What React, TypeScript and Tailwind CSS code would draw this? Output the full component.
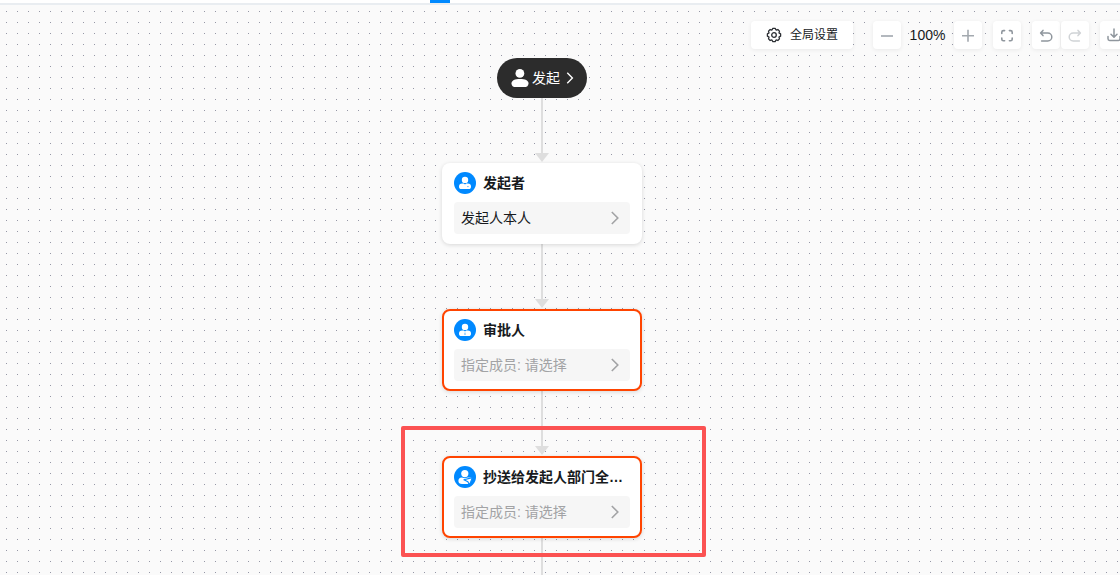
import React from 'react';
import clsx from 'clsx';

type NodeKind = 'initiator' | 'approver' | 'cc';

interface FlowNode {
	kind: NodeKind;
	title: string;
	content: string;
	invalid?: boolean;
	marked?: boolean;
}

const nodes: FlowNode[] = [
	{ kind: 'initiator', title: '发起者', content: '发起人本人' },
	{ kind: 'approver', title: '审批人', content: '指定成员: 请选择', invalid: true },
	{ kind: 'cc', title: '抄送给发起人部门全…', content: '指定成员: 请选择', invalid: true, marked: true },
];

const GearIcon = () => (
	<svg className="size-4" viewBox="0 0 16 16" fill="none" stroke="#2b2e33" strokeWidth="1.3" strokeLinejoin="round">
		<path d="M6.84 1.4h2.32l.91 1.61 1.77-.5 1.65 1.65-.5 1.77 1.61.91v2.32l-1.61.91.5 1.77-1.65 1.65-1.77-.5-.91 1.61H6.84l-.91-1.61-1.77.5-1.65-1.65.5-1.77-1.61-.91V6.84l1.61-.91-.5-1.77 1.65-1.65 1.77.5z" />
		<circle cx="8" cy="8" r="2.3" />
	</svg>
);

const MinusIcon = () => (
	<svg className="size-3.5" viewBox="0 0 14 14" stroke="#b3b8be" strokeWidth="2">
		<path d="M1 8h12" />
	</svg>
);

const PlusIcon = () => (
	<svg className="size-3.5" viewBox="0 0 14 14" stroke="#a3a9af" strokeWidth="1.6">
		<path d="M1 7.8h12M7 1.8v12" />
	</svg>
);

const ExpandIcon = () => (
	<svg className="size-3.5" viewBox="0 0 14 14" fill="none" stroke="#8f969d" strokeWidth="1.6" strokeLinecap="round">
		<path d="M1.8 5.4V4.2q0-1.6 1.6-1.6h1.2M9.4 2.6h1.2q1.6 0 1.6 1.6v1.2M12.2 10v1.2q0 1.6-1.6 1.6H9.4M4.6 12.8H3.4q-1.6 0-1.6-1.6V10" />
	</svg>
);

const UndoIcon = () => (
	<svg className="size-3.5" viewBox="0 0 14 14" fill="none" stroke="currentColor" strokeWidth="1.5" strokeLinecap="round" strokeLinejoin="round">
		<path d="M4 2.4 1.6 5 4 7.6M1.8 5h7a4 4 0 0 1 0 8H2.6" />
	</svg>
);

const RedoIcon = () => (
	<svg className="size-3.5" viewBox="0 0 14 14" fill="none" stroke="currentColor" strokeWidth="1.5" strokeLinecap="round" strokeLinejoin="round">
		<path d="M10 2.4 12.4 5 10 7.6M12.2 5h-7a4 4 0 0 0 0 8h6.2" />
	</svg>
);

const DownloadIcon = () => (
	<svg className="size-3.5" viewBox="0 0 14 14" fill="none" stroke="#8f969d" strokeWidth="1.5" strokeLinecap="round" strokeLinejoin="round">
		<path d="M7 1v8M4 6.2l3 3 3-3M1 8.4v2.4q0 1.6 1.6 1.6h8.8q1.6 0 1.6-1.6V8.4" />
	</svg>
);

const ArrowIcon = ({ className }: { className: string }) => (
	<svg className={className} viewBox="0 0 8 14" fill="none" stroke="currentColor" strokeWidth="1.6">
		<path d="m.8 1 6 6-6 6" />
	</svg>
);

const PersonIcon = () => (
	<svg className="size-5" viewBox="0 0 20 20" fill="#fff">
		<circle cx="9.9" cy="5.4" r="4.4" />
		<path d="M1.5 15.2c0-2.9 3.4-4.3 8.5-4.3s8.5 1.4 8.5 4.3c0 2.6-1.6 3.9-4.4 3.9H5.9c-2.8 0-4.4-1.3-4.4-3.9z" />
	</svg>
);

const NodeIcon = ({ kind }: { kind: NodeKind }) => (
	<svg className="size-[22px] shrink-0" viewBox="0 0 22 22">
		<circle cx="11" cy="11" r="11" fill="#0089ff" />
		{kind === 'cc' ? (
			<>
				<circle cx="10.8" cy="7.6" r="3.6" fill="#fff" />
				<path d="M4.4 14.8q0-3 3.4-3.4l3 .9 3-.9h3.4v3.2q0 3.4-3.6 3.4H8q-3.6 0-3.6-3.2z" fill="#fff" />
				<path d="m9.9 13.8 4 1.9 1.5 3.3 3-7.4z" fill="#fff" stroke="#0089ff" strokeWidth="1.1" strokeLinejoin="round" />
			</>
		) : (
			<>
				<circle cx="11" cy="7.9" r="3.2" fill="#fff" />
				<path d="M5 14.4q0-2.8 3.2-3h1.6l1.2 1.2 1.2-1.2h1.6q3.2.2 3.2 3 0 2.6-2.4 2.6H7.4Q5 17 5 14.4z" fill="#fff" />
				{kind === 'approver' ? (
					<path d="m11 12.8-.8 2.4.8 1 .8-1z" fill="#6bbaff" />
				) : (
					<path d="M13 14.6h1.8" stroke="#5ab2ff" strokeWidth=".8" />
				)}
			</>
		)}
	</svg>
);

const Connector = () => (
	<div className="flex h-[65px] flex-col items-center">
		<div className="w-0.5 flex-1 bg-[#dedede]" />
		<svg className="mb-px h-[9px] w-3.5" viewBox="0 0 14 9" fill="#dedede">
			<path d="M0 0h14L7 9z" />
		</svg>
	</div>
);

const toolClass = 'flex size-7 shrink-0 items-center justify-center rounded bg-white text-[#8f969d] shadow-[0_1px_4px_rgba(0,0,0,0.07)]';

const Toolbar: React.FC = () => (
	<div className="-mr-2 flex items-center justify-end pt-4">
		<button className="mr-5 flex h-7 w-[102px] items-center justify-center gap-2 rounded bg-white text-xs text-[#171a1d] shadow-[0_1px_4px_rgba(0,0,0,0.07)]">
			<GearIcon />
			全局设置
		</button>
		<button aria-label="缩小" className={toolClass}><MinusIcon /></button>
		<span className="w-[53px] text-center text-sm text-[#171a1d]">100%</span>
		<button aria-label="放大" className={toolClass}><PlusIcon /></button>
		<button aria-label="全屏" className={clsx(toolClass, 'ml-[11px]')}><ExpandIcon /></button>
		<button aria-label="撤销" className={clsx(toolClass, 'ml-[11px]')}><UndoIcon /></button>
		<button aria-label="重做" disabled className={clsx(toolClass, 'ml-px')}>
			<span className="text-[#d0d3d6]"><RedoIcon /></span>
		</button>
		<button aria-label="下载" className={clsx(toolClass, 'ml-[11px]')}><DownloadIcon /></button>
	</div>
);

const NodeCard = ({ node }: { node: FlowNode }) => (
	<div className="relative">
		<div
			className={clsx(
				'w-[200px] rounded-lg bg-white shadow-[0_1px_4px_rgba(0,0,0,0.14)]',
				node.invalid ? 'border-2 border-[#ff4400] px-2.5 py-2' : 'px-3 pt-[9px] pb-2.5'
			)}
		>
			<div className="flex h-[22px] items-center gap-[7px]">
				<NodeIcon kind={node.kind} />
				<h3 className="text-sm font-bold whitespace-nowrap text-[#171a1d]">{node.title}</h3>
			</div>
			<button
				className={clsx(
					'mt-2 flex h-8 w-full items-center justify-between rounded bg-[#f6f6f6] pr-[11px] pl-[7px] text-sm',
					node.invalid ? 'text-[#a2a3a5]' : 'text-[#171a1d]'
				)}
			>
				{node.content}
				<ArrowIcon className="h-3.5 w-2 text-[#a2a3a5]" />
			</button>
		</div>
		{node.marked && (
			<div className="pointer-events-none absolute -top-[30px] -right-16 -bottom-[19px] -left-[41px] rounded-xs border-4 border-[#fb5252]" />
		)}
	</div>
);

const App: React.FC = () => {
	return (
		<div className="flex h-screen flex-col overflow-hidden bg-[#fafafa] font-['Liberation_Sans','Noto_Sans_CJK_SC',sans-serif]">
			<header className="flex h-[5px] shrink-0 justify-center border-b-2 border-[#e9edf1] bg-white pr-60">
				<div className="w-5 bg-[#0089ff]" />
			</header>
			<main className="flex flex-1 flex-col bg-[conic-gradient(at_1px_1px,transparent_75%,#9597a6_75%)] bg-[length:11px_11px] bg-[position:6px_6px]">
				<Toolbar />
				<div className="mt-[9px] flex flex-1 flex-col items-center pr-9">
					<button className="flex h-10 w-[90px] shrink-0 items-center justify-center rounded-full bg-[#2c2c2c] text-sm text-white">
						<PersonIcon />
						<span className="mr-1.5 ml-0.5">发起</span>
						<ArrowIcon className="h-3 w-2" />
					</button>
					{nodes.map((node) => (
						<React.Fragment key={node.kind}>
							<Connector />
							<NodeCard node={node} />
						</React.Fragment>
					))}
					<div className="w-0.5 flex-1 bg-[#dedede]" />
				</div>
			</main>
		</div>
	);
};

export default App;
